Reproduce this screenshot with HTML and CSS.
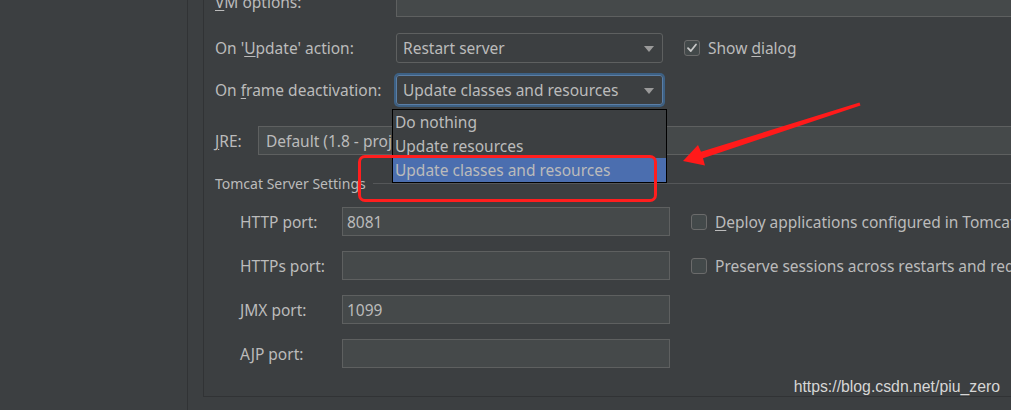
FILE: index.html
```html
<!DOCTYPE html>
<html>
<head>
<meta charset="utf-8">
<link rel="stylesheet" href="styles.css">
</head>
<body>
<div class="app">
  <div class="sidebar"></div>
  <div class="gutter"></div>
  <div class="panel">
    <div class="row r-vm">
      <span class="label"><u>V</u>M options:</span>
      <div class="field grow"></div>
    </div>
    <div class="row r-update">
      <span class="label">On '<u>U</u>pdate' action:</span>
      <div class="combo">Restart server<i class="caret"></i></div>
      <label class="check check-dialog"><span class="box"><svg width="14" height="14" viewBox="0 0 14 14"><path d="M3 7.2 L5.8 10 L11 3.5" fill="none" stroke="#c8c8c8" stroke-width="1.8" stroke-linecap="round" stroke-linejoin="round"/></svg></span><span>Show <u>d</u>ialog</span></label>
    </div>
    <div class="row r-frame">
      <span class="label">On <u>f</u>rame deactivation:</span>
      <div class="combo focused">Update classes and resources<i class="caret"></i>
        <div class="popup">
          <div class="item">Do nothing</div>
          <div class="item">Update resources</div>
          <div class="item selected">Update classes and resources</div>
        </div>
      </div>
    </div>
    <div class="row r-jre">
      <span class="label label-jre"><u>J</u>RE:</span>
      <div class="field grow jre"><span class="jre-text">Default (1.8 - project SDK)</span></div>
    </div>
    <div class="section">
      <span class="section-title">Tomcat Server Settings</span>
      <span class="sep"></span>
    </div>
    <div class="ports">
      <div class="port-row">
        <span class="plabel">HTTP port:</span>
        <div class="pfield">8081</div>
        <label class="check"><span class="box"></span><span><u>D</u>eploy applications configured in Tomcat instance</span></label>
      </div>
      <div class="port-row">
        <span class="plabel">HTTPs port:</span>
        <div class="pfield"></div>
        <label class="check"><span class="box"></span><span>Preserve sessions across restarts and redeploys</span></label>
      </div>
      <div class="port-row">
        <span class="plabel">JMX port:</span>
        <div class="pfield">1099</div>
      </div>
      <div class="port-row">
        <span class="plabel">AJP port:</span>
        <div class="pfield"></div>
      </div>
    </div>
  </div>
</div>
<div class="redbox"></div>
<svg class="arrow" width="1011" height="410" viewBox="0 0 1011 410">
  <polygon points="859.5,102.4 701,151.8 698,145 683,161 705,165.5 703,158.2 860.5,105.6" fill="#ff1a1a"/>
</svg>
<div class="watermark">https://blog.csdn.net/piu_zero</div>
</body>
</html>
```
FILE: styles.css
```css
html, body {
  margin: 0;
  padding: 0;
  width: 1011px;
  height: 410px;
  overflow: hidden;
  background: #3c3f41;
  font-family: "Noto Sans", "Open Sans", sans-serif;
  font-size: 15.5px;
  color: #bbbbbb;
}
u {
  text-decoration: underline;
  text-underline-offset: 2px;
  text-decoration-thickness: 1px;
}
.app {
  display: flex;
  height: 410px;
}
.sidebar {
  width: 187px;
  flex: none;
  border-right: 1px solid #313335;
}
.gutter {
  width: 15px;
  flex: none;
}
.panel {
  flex: none;
  width: 808px;
  height: 397px;
  border-left: 1px solid #313335;
  border-bottom: 1px solid #313335;
  padding-left: 11px;
  box-sizing: border-box;
  display: flex;
  flex-direction: column;
  overflow: hidden;
}
.row {
  display: flex;
  align-items: center;
  flex: none;
}
.label {
  width: 181px;
  flex: none;
  white-space: nowrap;
}
.label-jre {
  width: 43px;
}
.field {
  background: #45494a;
  border: 1px solid #5e6060;
  box-sizing: border-box;
  height: 100%;
}
.grow {
  flex: 1;
}
.r-vm {
  height: 30px;
  margin-top: -13px;
  margin-right: -4px;
}
.r-update {
  height: 30px;
  margin-top: 16px;
}
.r-frame {
  height: 30px;
  margin-top: 12px;
}
.r-jre {
  height: 29px;
  margin-top: 21px;
  margin-right: -4px;
}
.jre {
  display: flex;
  align-items: center;
  padding-left: 7px;
  white-space: nowrap;
}
.jre-text {
  display: block;
  width: 126px;
  overflow: hidden;
}
.combo {
  position: relative;
  width: 267px;
  height: 30px;
  flex: none;
  box-sizing: border-box;
  border: 1px solid #5e6060;
  border-radius: 3px;
  padding-left: 6px;
  display: flex;
  align-items: center;
  white-space: nowrap;
}
.combo.focused {
  border-color: #5b7ea5;
  box-shadow: 0 0 0 2px #3d6185;
}
.caret {
  position: absolute;
  right: 8px;
  top: 12px;
  width: 0;
  height: 0;
  border-left: 5.5px solid transparent;
  border-right: 5.5px solid transparent;
  border-top: 6px solid #9a9a9a;
}
.popup {
  position: absolute;
  left: -5px;
  top: 33px;
  width: 275px;
  box-sizing: border-box;
  border: 1px solid #000000;
  background: #3c3f41;
  z-index: 2;
}
.item {
  height: 24px;
  line-height: 24px;
  padding-left: 2px;
  white-space: nowrap;
}
.item.selected {
  background: #4b6eaf;
}
.check {
  display: flex;
  align-items: center;
  white-space: nowrap;
  margin-left: 21px;
}
.box {
  width: 16px;
  height: 16px;
  box-sizing: border-box;
  border: 1px solid #6b6b6b;
  border-radius: 3px;
  background: #43494a;
  margin-right: 8px;
  flex: none;
  display: flex;
  align-items: center;
  justify-content: center;
}
.section {
  display: flex;
  align-items: center;
  height: 20px;
  margin-top: 18px;
  flex: none;
}
.section-title {
  font-size: 14px;
  white-space: nowrap;
}
.sep {
  flex: 1;
  height: 1px;
  background: #555759;
  margin-left: 7px;
}
.ports {
  display: flex;
  flex-direction: column;
  gap: 15px;
  margin-top: 14px;
  padding-left: 25px;
}
.port-row {
  display: flex;
  align-items: center;
  height: 29px;
}
.plabel {
  width: 102px;
  flex: none;
  white-space: nowrap;
}
.pfield {
  width: 328px;
  height: 29px;
  flex: none;
  box-sizing: border-box;
  background: #45494a;
  border: 1px solid #5e6060;
  padding-left: 4px;
  display: flex;
  align-items: center;
}
.redbox {
  position: absolute;
  left: 358px;
  top: 155px;
  width: 299px;
  height: 47px;
  box-sizing: border-box;
  border: 3px solid #ff1e1e;
  border-radius: 7px;
  z-index: 3;
}
.arrow {
  position: absolute;
  left: 0;
  top: 0;
  z-index: 3;
}
.watermark {
  position: absolute;
  right: 11px;
  top: 378px;
  font-family: "Liberation Sans", Arial, sans-serif;
  font-size: 15.8px;
  color: #d6d6d6;
  white-space: nowrap;
}
```
